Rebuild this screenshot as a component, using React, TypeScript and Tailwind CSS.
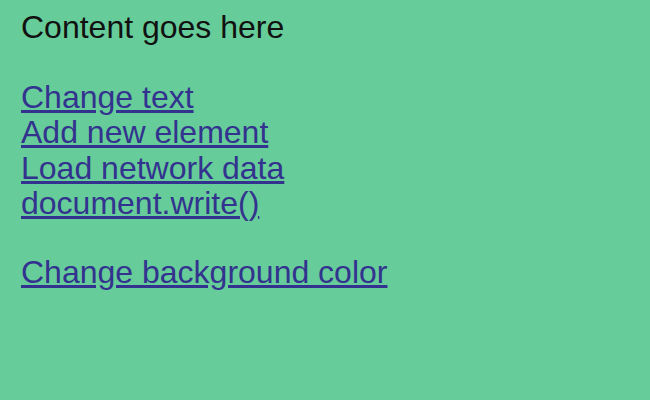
export default function App() {
  return (
    <div
      className="min-h-[400px] w-full bg-[#66cc99] pl-[21px] pt-[10px] text-[32px] leading-[35.6px] text-[#111]"
      style={{ fontFamily: '"Liberation Sans", Arial, sans-serif' }}
    >
      <p className="mb-[34px]">Content goes here</p>
      <div className="flex flex-col items-start">
        <a href="#" className="text-[#33338f] underline">Change text</a>
        <a href="#" className="text-[#33338f] underline">Add new element</a>
        <a href="#" className="text-[#33338f] underline">Load network data</a>
        <a href="#" className="text-[#33338f] underline">document.write()</a>
        <div className="h-[33px]" />
        <a href="#" className="text-[#33338f] underline">Change background color</a>
      </div>
    </div>
  );
}
